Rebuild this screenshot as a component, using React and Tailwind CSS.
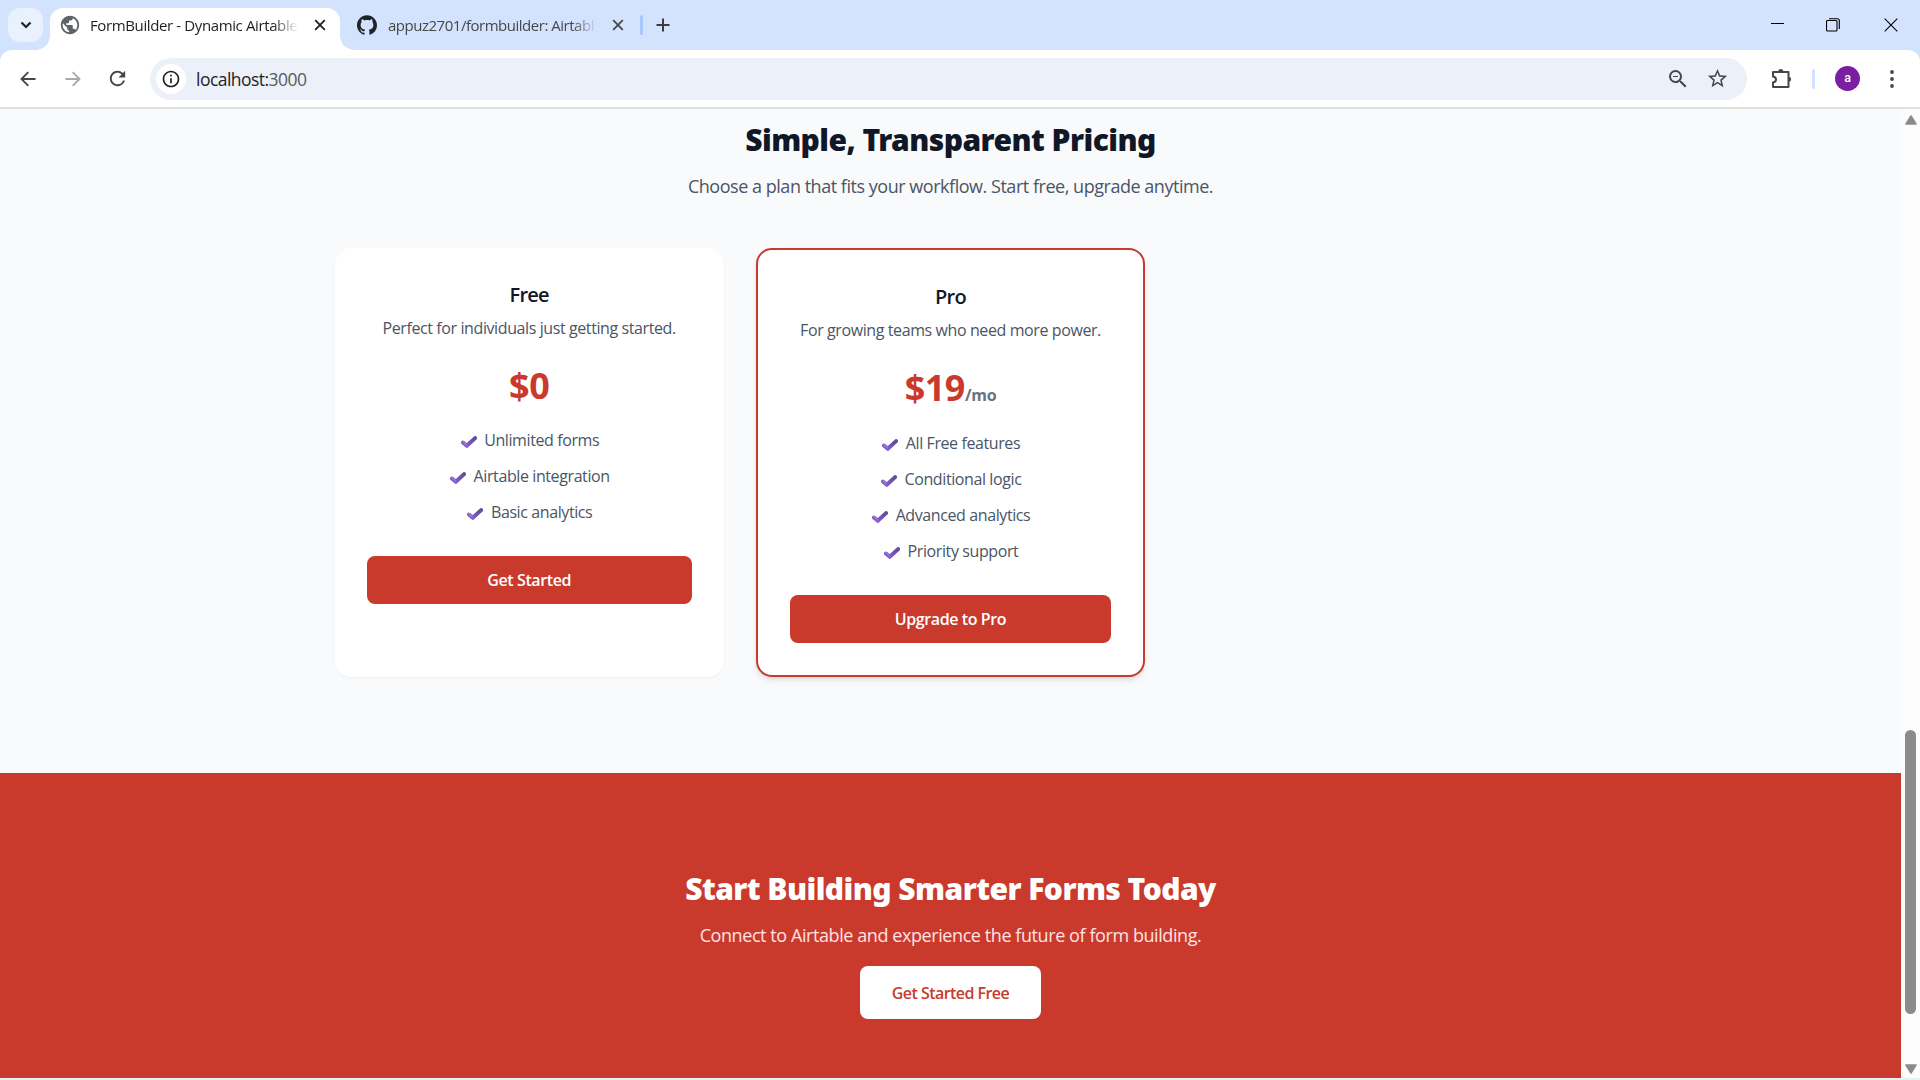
import React from "react";
import { MdPublic, MdInfoOutline, MdStarBorder, MdZoomOut, MdRefresh } from "react-icons/md";
import { SiGithub } from "react-icons/si";

function CloseIcon({ className }) {
  return (
    <svg viewBox="0 0 12 12" className={className} fill="none" stroke="currentColor" strokeWidth="1.8">
      <path d="M1.2 1.2l9.6 9.6M10.8 1.2l-9.6 9.6" />
    </svg>
  );
}

function TabStrip() {
  return (
    <div className="flex h-[50px] items-start bg-[#d3e3fd] text-[#1f1f1f]">
      <div className="mt-2 ml-2 flex h-[34px] w-[35px] items-center justify-center rounded-xl bg-[#e9f0fe]">
        <svg viewBox="0 0 12 8" className="h-2 w-3" fill="none" stroke="currentColor" strokeWidth="2.2">
          <path d="M1.5 1.5L6 6l4.5-4.5" />
        </svg>
      </div>
      <div className="relative mt-2 ml-[7px] flex h-[42px] w-[290px] items-center rounded-t-[13px] bg-white pb-2">
        <span className="absolute bottom-0 -left-[14px] size-[14px] bg-[radial-gradient(circle_at_0_0,transparent_13.5px,white_14px)]" />
        <span className="absolute -right-[14px] bottom-0 size-[14px] bg-[radial-gradient(circle_at_100%_0,transparent_13.5px,white_14px)]" />
        <MdPublic className="ml-[9px] size-[22px] shrink-0 text-[#5f6368]" />
        <span className="ml-[9px] w-[208px] text-[15px] leading-6 tracking-[-0.38px] whitespace-nowrap [mask-image:linear-gradient(to_right,black_88%,transparent)]">
          FormBuilder - Dynamic Airtable
        </span>
        <CloseIcon className="ml-[16px] size-3" />
      </div>
      <div className="flex h-[50px] items-center">
        <SiGithub className="ml-[17px] size-5 text-[#1f2328]" />
        <span className="ml-[11px] w-[209px] text-[15px] leading-6 tracking-[-0.48px] whitespace-nowrap text-[#474747] [mask-image:linear-gradient(to_right,black_88%,transparent)]">
          appuz2701/formbuilder: Airtabl
        </span>
        <CloseIcon className="ml-[15px] size-3 text-[#474747]" />
        <span className="ml-[16px] h-5 w-[3px] rounded-full bg-[#a8c7fa]" />
        <svg viewBox="0 0 14 14" className="ml-[13px] size-[14px]" fill="none" stroke="#3c3c3c" strokeWidth="2">
          <path d="M7 .5v13M.5 7h13" />
        </svg>
      </div>
      <div className="ml-auto flex h-[50px] items-center pr-[22px] text-black">
        <svg viewBox="0 0 14 14" className="size-[14px]" fill="none" stroke="currentColor" shapeRendering="crispEdges">
          <path d="M.5 5.5h13" />
        </svg>
        <svg viewBox="0 0 14 14" className="ml-[42px] size-[14px]" fill="none" stroke="currentColor" strokeWidth="1.1">
          <rect x=".5" y="2.5" width="10.5" height="10.5" rx="1" />
          <path d="M3 .7h8.3a2 2 0 0 1 2 2V11" />
        </svg>
        <svg viewBox="0 0 14 14" className="ml-[44px] size-[14px]" fill="none" stroke="currentColor" strokeWidth="1.1">
          <path d="M.7.7l12.6 12.6M13.3.7L.7 13.3" />
        </svg>
      </div>
    </div>
  );
}

function Toolbar() {
  return (
    <div className="bg-[#d3e3fd]">
      <div className="flex h-[59px] items-center rounded-t-[12px] border-b-2 border-[#dfe0dc] bg-white text-[#474747]">
        <svg viewBox="0 0 16 16" className="ml-[19.5px] size-4" fill="none" stroke="currentColor" strokeWidth="1.9">
          <path d="M15.5 8H2M8.3 1.2L1.5 8l6.8 6.8" />
        </svg>
        <svg viewBox="0 0 16 16" className="ml-[29px] size-4 text-[#a9a9a9]" fill="none" stroke="currentColor" strokeWidth="1.9">
          <path d="M.5 8H14M7.7 1.2L14.5 8l-6.8 6.8" />
        </svg>
        <MdRefresh className="ml-[25.5px] size-[23px]" />
        <div className="ml-[21px] flex h-[42px] w-[1597px] items-center rounded-full bg-[#ecf0f9]">
          <div className="ml-[6px] flex size-[30px] items-center justify-center rounded-full bg-white">
            <MdInfoOutline className="size-5 text-[#1f1f1f]" />
          </div>
          <span className="ml-[10px] text-[17.5px] leading-6 tracking-[-0.53px] text-[#1f1f1f]">
            localhost:<span className="text-[#5a5a5a]">3000</span>
          </span>
          <MdZoomOut className="ml-auto size-[24px]" />
          <MdStarBorder className="mr-[18px] ml-[16px] size-[23px]" />
        </div>
        <svg viewBox="0 0 20 20" className="mb-[1px] ml-6 size-5" fill="none" stroke="currentColor" strokeWidth="2" strokeLinejoin="round">
          <path d="M2 4h15.5v15H2v-4.6c1.9-.3 3-1.4 3-3s-1.1-2.7-3-3z" />
          <path d="M7.3 3.5a2.5 2.5 0 0 1 5 0zM18 9a2 2 0 0 1 0 4.5z" fill="currentColor" stroke="none" />
        </svg>
        <span className="ml-[21px] h-5 w-[3px] rounded-full bg-[#d3e3fd]" />
        <span className="ml-5 flex size-[25px] items-center justify-center rounded-full bg-[#7b1fa2] font-[Roboto] text-[12.5px] leading-none font-medium text-white">
          a
        </span>
        <svg viewBox="0 0 4 18" className="ml-[30px] h-[18px] w-1" fill="currentColor">
          <circle cx="2" cy="2" r="1.9" />
          <circle cx="2" cy="9" r="1.9" />
          <circle cx="2" cy="16" r="1.9" />
        </svg>
      </div>
    </div>
  );
}

function Check() {
  return (
    <svg viewBox="0 0 16 12" className="mt-[4px] mr-[7.5px] ml-[1.5px] h-3 w-4" fill="none">
      <defs>
        <linearGradient id="tick" x1="0" y1="1" x2="0.6" y2="0">
          <stop offset="0" stopColor="#8a5be0" />
          <stop offset="1" stopColor="#62509c" />
        </linearGradient>
      </defs>
      <path
        d="M1.9 6.5l3.9 3.300L14.100 2.100"
        stroke="url(#tick)"
        strokeWidth="4"
        strokeLinejoin="round"
        strokeLinecap="round"
      />
      <path d="M1.7 5.600l3.500 2.900" stroke="#9a8bc8" strokeWidth="1.2" strokeLinecap="round" />
    </svg>
  );
}

const plans = [
  {
    name: "Free",
    blurb: "Perfect for individuals just getting started.",
    price: "$0",
    features: ["Unlimited forms", "Airtable integration", "Basic analytics"],
    action: "Get Started",
    card: "shadow-[0_1px_2px_rgba(0,0,0,0.05)]",
    listGap: "mt-[22px]",
  },
  {
    name: "Pro",
    blurb: "For growing teams who need more power.",
    price: "$19",
    unit: "/mo",
    features: ["All Free features", "Conditional logic", "Advanced analytics", "Priority support"],
    action: "Upgrade to Pro",
    card: "border-2 border-[#c93a2d] shadow-md",
    listGap: "mt-[23px]",
  },
];

function PlanCard({ plan }) {
  return (
    <div className={`rounded-2xl bg-white p-8 text-center ${plan.card}`}>
      <h3 className="pt-px text-xl leading-7 font-semibold tracking-[-0.8px] text-gray-900">{plan.name}</h3>
      <p className="mt-[7px] text-base tracking-[-0.4px] text-gray-600">{plan.blurb}</p>
      <div className="mt-[26px] h-10 text-4xl leading-10 font-bold tracking-[-0.5px] text-[#c93a2d]">
        {plan.price}
        {plan.unit && <span className="text-base tracking-[-0.3px] text-gray-500">{plan.unit}</span>}
      </div>
      <ul className={`space-y-3 ${plan.listGap}`}>
        {plan.features.map((f) => (
          <li key={f} className="flex h-6 items-center justify-center text-base tracking-[-0.4px] text-gray-600">
            <Check />
            {f}
          </li>
        ))}
      </ul>
      <button className="mt-8 h-12 w-full rounded-lg bg-[#c93a2d] text-base font-semibold tracking-[-0.4px] text-white">
        {plan.action}
      </button>
    </div>
  );
}

function Page() {
  return (
    <main className="flex w-[1901px] flex-col overflow-hidden bg-[#f9fafc] text-center">
      <section className="pt-[13px] pb-24">
        <h2 className="font-['Noto_Sans'] text-3xl leading-9 font-black tracking-[-0.55px] text-gray-900">
          Simple, Transparent Pricing
        </h2>
        <p className="mt-[14px] text-lg leading-7 tracking-[-0.47px] text-gray-600">
          Choose a plan that fits your workflow. Start free, upgrade anytime.
        </p>
        <div className="mx-auto mt-12 grid w-[1232px] grid-cols-3 gap-8">
          {plans.map((p) => (
            <PlanCard key={p.name} plan={p} />
          ))}
        </div>
      </section>
      <section className="flex-1 bg-[#c93a2d] pt-[98px] text-white">
        <h2 className="font-['Noto_Sans'] text-3xl leading-9 font-black tracking-[-0.55px]">
          Start Building Smarter Forms Today
        </h2>
        <p className="mt-[14px] text-lg leading-7 tracking-[-0.42px] text-red-100">
          Connect to Airtable and experience the future of form building.
        </p>
        <button className="mt-[17px] h-[53px] w-[181px] rounded-lg bg-white text-base font-semibold tracking-[-0.55px] text-[#c93a2d]">
          Get Started Free
        </button>
      </section>
    </main>
  );
}

function Scrollbar() {
  return (
    <div className="flex flex-1 flex-col items-center bg-[#fcfcfc] pt-[6px] text-[#8b8b8b]">
      <svg viewBox="0 0 12 10" className="h-[10px] w-3" fill="currentColor" stroke="currentColor" strokeWidth="1.5" strokeLinejoin="round">
        <path d="M6 1l5 8H1z" />
      </svg>
      <div className="mt-[605px] h-[284px] w-[11px] rounded-full bg-[#8b8b8b]" />
      <svg viewBox="0 0 12 10" className="mt-[50px] h-[10px] w-3" fill="currentColor" stroke="currentColor" strokeWidth="1.5" strokeLinejoin="round">
        <path d="M6 9L1 1h10z" />
      </svg>
    </div>
  );
}

export default function App() {
  return (
    <div className="flex h-[1080px] w-[1920px] flex-col overflow-hidden bg-[#e3f3f3] font-['Open_Sans','Noto_Sans',sans-serif]">
      <TabStrip />
      <Toolbar />
      <div className="flex h-[969px]">
        <Page />
        <Scrollbar />
      </div>
    </div>
  );
}
